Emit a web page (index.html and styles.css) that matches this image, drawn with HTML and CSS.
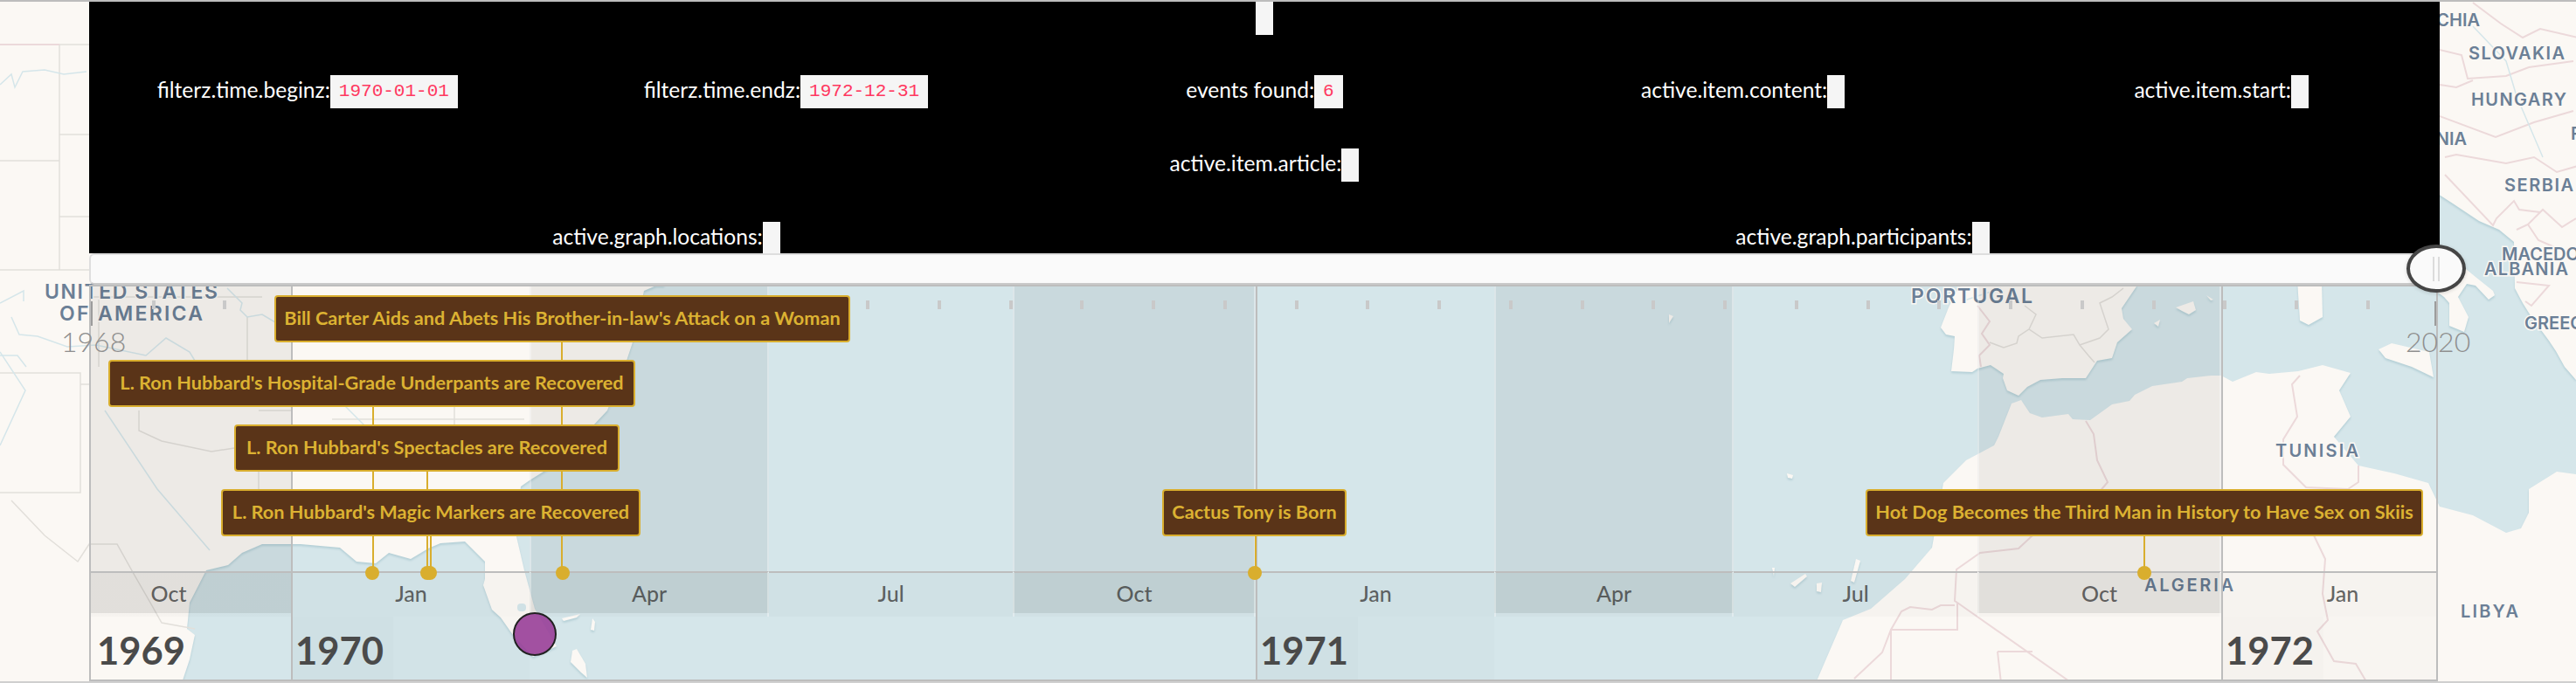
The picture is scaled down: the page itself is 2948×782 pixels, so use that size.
FILE: index.html
```html
<!DOCTYPE html>
<html lang="en">
<head>
<meta charset="utf-8">
<title>Timeline</title>
<link rel="stylesheet" href="styles.css">
</head>
<body>
<div class="stage">
  <svg class="map" viewBox="0 0 2948 782" width="2948" height="782" aria-hidden="true">
    <rect class="water" x="0" y="0" width="2948" height="782"/>
    <g class="land">
      <path d="M0 0H760V327L751 327L737 333L724 392L717 413L695 470L679 487L638 530L606 550L596 557L590 610L600 653L612 697L637 740L610 752L587 727L573 707L563 698L553 670L555 663L555 643L532 620L504 622L490 628L470 640L445 633L430 645L408 643L389 627L344 623L300 623L277 633L261 647L236 653L217 690L214 720L223 727L217 755L208 782H0Z"/>
      <path d="M2078 782L2109 710L2141 697L2180 663L2211 627L2224 553L2250 527L2282 510L2287 500L2302 462L2313 458L2323 473L2337 478L2367 474L2372 480L2392 481L2417 463L2437 459L2443 452L2463 442L2497 437L2503 433L2530 430L2542 430L2555 437L2582 426L2597 428L2630 425L2658 418L2690 427L2677 447L2690 477L2671 500L2699 533L2740 542L2779 553L2792 580L2830 590L2868 610L2885 605L2894 587L2894 560L2926 540L2948 543V782Z"/>
      <path d="M2250 320L2445 320L2445 328L2428 353L2430 365L2440 377L2423 392L2417 410L2400 413L2387 433L2360 433L2335 435L2320 443L2310 453L2297 447L2292 433L2293 428L2278 418L2263 422L2257 426L2233 425L2236 400L2237 385L2227 383L2221 375L2230 352L2238 335Z"/>
      <path d="M2790 0H2948V435L2935 420L2925 402L2917 390L2897 363L2887 347L2878 330L2877 277L2860 263L2837 253L2807 233L2790 222Z"/>
      <path d="M2790 280L2822 308L2833 317L2853 333L2855 338L2848 343L2833 327L2823 325L2813 340L2825 363L2820 380L2803 373L2803 347L2797 340L2790 335Z"/>
      <path d="M2722 400L2737 393L2780 403L2785 432L2760 420L2730 410Z"/>
      <path d="M2629 320L2657 320L2658 363L2642 372L2632 367Z"/>
      <path d="M2490 352L2510 345L2513 355L2505 360L2497 356Z"/>
      <path d="M2465 370L2472 366L2470 374Z"/>
      <path d="M2525 338L2533 343L2530 344Z"/>
      <path d="M2124 640L2129 642L2122 667L2118 665Z"/>
      <path d="M2049 668L2066 657L2068 660L2054 672Z"/>
      <path d="M2079 668L2085 667L2084 678L2079 677Z"/>
      <path d="M2045 542L2052 544L2051 548L2046 547Z"/>
      <path d="M2028 650L2031 650L2030 660Z"/>
      <path d="M643 708L664 703L660 707L645 711Z"/>
      <path d="M678 708L681 712L680 722L676 721Z"/>
      <path d="M655 745L660 743L670 760L672 776L665 770L653 758Z"/>
      <path d="M1910 360L1915 362L1910 370Z"/>
    </g>
    <rect class="lake" x="592" y="691" width="10" height="9" rx="4"/>
    <g class="grey-lines">
      <path d="M0 51H102M68 51V309M68 154H102M0 184H68M68 248H102M0 309H102"/>
      <path d="M0 427H92V564H0M92 427V440H104"/>
      <path d="M13 573L51 613L89 643L102 623L134 623L153 657L172 690L185 713L223 720"/>
      <path d="M113 343V420M283 363V420M104 340H300M320 350H700M159 470L159 493L185 505L242 517L268 513L333 505"/>
      <path d="M296 470H333M380 480H600M520 440V520M296 523V564"/>
      <path d="M2277 392L2293 398L2308 393L2310 385L2322 377L2337 387L2373 383L2380 395L2390 407L2397 415M2322 377L2330 360L2317 350M2380 395L2403 387L2413 377L2403 347L2417 340L2430 330"/>
    </g>
    <g class="pink-lines">
      <path d="M2263 350L2277 368L2268 382L2277 395L2265 407L2267 420"/>
      <path d="M2387 482L2396 497L2400 527L2412 552L2380 590L2326 613L2310 628L2266 633L2239 652L2237 688L2240 690L2371 782M2240 690V721H2164V782M2237 693L2221 693L2211 698L2186 695L2176 700L2164 721L2154 747L2122 777M2286 746H2326M2286 746L2290 782"/>
      <path d="M2632 430L2623 440L2629 477L2613 503L2613 532L2639 558L2687 560L2699 552L2699 533M2687 560L2648 613L2661 640L2658 680L2664 710L2652 723L2671 757L2696 760L2709 782"/>
      <path d="M2830 3L2862 27L2887 43L2907 33L2950 43M2792 57L2817 63L2824 90L2868 87L2894 77L2945 70M2792 97L2811 100L2830 92M2792 133L2856 157L2900 140L2945 127M2798 180L2811 177L2868 187L2900 180L2926 197L2950 190M2798 200L2853 258L2857 250L2877 230L2883 240L2907 243M2880 263L2893 257L2910 240L2932 260L2948 250M2893 257L2905 275L2928 285M2880 323L2917 327L2897 350L2890 345"/>
      <path d="M0 51H68" />
    </g>
    <g class="blue-lines">
      <path d="M0 97L13 85L17 100L26 82L51 80L73 85L99 82"/>
      <path d="M13 363L22 383L43 385L77 397L110 395L167 407L190 387L217 403L223 413"/>
      <path d="M0 347L27 333L27 345M0 407L20 407L30 420M260 330L277 347L275 355L283 363L300 360L320 372"/>
      <path d="M0 403L29 447L0 510M120 470L180 560L240 630M380 450L430 500L470 540M2245 345L2290 330M2830 30L2868 70L2880 110L2910 180"/>
    </g>
    <g class="place">
      <text class="big" x="51" y="342" textLength="198">UNITED STATES</text>
      <text class="big" x="68" y="367" textLength="164">OF AMERICA</text>
      <text class="big" x="2187" y="347" textLength="139">PORTUGAL</text>
      <text x="2604" y="523" textLength="95">TUNISIA</text>
      <text x="2454" y="677" textLength="102">ALGERIA</text>
      <text x="2816" y="707" textLength="66">LIBYA</text>
      <text x="2838" y="30" text-anchor="end">CZECHIA</text>
      <text x="2825" y="68" textLength="110">SLOVAKIA</text>
      <text x="2828" y="121" textLength="109">HUNGARY</text>
      <text x="2823" y="166" text-anchor="end">SLOVENIA</text>
      <text x="2942" y="160">ROMANIA</text>
      <text x="2866" y="219" textLength="79">SERBIA</text>
      <text x="2863" y="298">MACEDONIA</text>
      <text x="2843" y="315" textLength="96">ALBANIA</text>
      <text x="2889" y="377">GREECE</text>
    </g>
  </svg>

  <div class="topline"></div>

  <section class="panel">
    <div class="row">
      <div class="item"><code class="chip"></code></div>
    </div>
    <div class="row">
      <div class="item"><span class="label">filterz.time.beginz:</span><code class="chip">1970-01-01</code></div>
      <div class="item"><span class="label">filterz.time.endz:</span><code class="chip">1972-12-31</code></div>
      <div class="item"><span class="label">events found:</span><code class="chip">6</code></div>
      <div class="item"><span class="label">active.item.content:</span><code class="chip"></code></div>
      <div class="item"><span class="label">active.item.start:</span><code class="chip"></code></div>
    </div>
    <div class="row">
      <div class="item"><span class="label">active.item.article:</span><code class="chip"></code></div>
    </div>
    <div class="row">
      <div class="item"><span class="label">active.graph.locations:</span><code class="chip"></code></div>
      <div class="item"><span class="label">active.graph.participants:</span><code class="chip"></code></div>
    </div>
  </section>

  <div class="slider">
    <div class="handle"><i class="grip"></i><i class="grip"></i></div>
  </div>

  <section class="timeline">
    <div class="quarters">
      <div class="q dark first" style="width:280px">
        <div class="q-top"></div><div class="q-month">Oct</div>
        <div class="q-year"><span class="year">1969</span></div>
      </div>
      <div class="q newyear" style="width:273px">
        <div class="q-top"></div><div class="q-month">Jan</div>
        <div class="q-year"><span class="year">1970</span></div>
      </div>
      <div class="q dark" style="width:274px">
        <div class="q-top"></div><div class="q-month">Apr</div><div class="q-year"></div>
      </div>
      <div class="q" style="width:279px">
        <div class="q-top"></div><div class="q-month">Jul</div><div class="q-year"></div>
      </div>
      <div class="q dark" style="width:278px">
        <div class="q-top"></div><div class="q-month">Oct</div><div class="q-year"></div>
      </div>
      <div class="q newyear" style="width:273px">
        <div class="q-top"></div><div class="q-month">Jan</div>
        <div class="q-year"><span class="year">1971</span></div>
      </div>
      <div class="q dark" style="width:274px">
        <div class="q-top"></div><div class="q-month">Apr</div><div class="q-year"></div>
      </div>
      <div class="q" style="width:279px">
        <div class="q-top"></div><div class="q-month">Jul</div><div class="q-year"></div>
      </div>
      <div class="q dark" style="width:279px">
        <div class="q-top"></div><div class="q-month">Oct</div><div class="q-year"></div>
      </div>
      <div class="q newyear" style="width:276px">
        <div class="q-top"></div><div class="q-month">Jan</div>
        <div class="q-year"><span class="year">1972</span></div>
      </div>
    </div>
    <div class="ticks"></div>
  </section>

  <i class="range-tick range-tick-start"></i>
  <i class="range-tick range-tick-end"></i>
  <span class="range-year range-year-start">1968</span>
  <span class="range-year range-year-end">2020</span>

  <i class="stem s1"></i><i class="stem s2"></i><i class="stem s3"></i>
  <i class="stem s4"></i><i class="stem s5"></i><i class="stem s6"></i>
  <i class="dot d1"></i><i class="dot d2"></i><i class="dot d3"></i>
  <i class="dot d4"></i><i class="dot d5"></i><i class="dot d6"></i>

  <div class="tag t1">Bill Carter Aids and Abets His Brother-in-law's Attack on a Woman</div>
  <div class="tag t2">L. Ron Hubbard's Hospital-Grade Underpants are Recovered</div>
  <div class="tag t3">L. Ron Hubbard's Spectacles are Recovered</div>
  <div class="tag t4">L. Ron Hubbard's Magic Markers are Recovered</div>
  <div class="tag t5">Cactus Tony is Born</div>
  <div class="tag t6">Hot Dog Becomes the Third Man in History to Have Sex on Skiis</div>

  <i class="marker"></i>
  <div class="pagebottom"></div>
</div>
</body>
</html>
```

FILE: styles.css
```css
* { box-sizing: border-box; }
html, body { margin: 0; padding: 0; }
body { background: #fbf8f4; font-family: "Lato", "Liberation Sans", sans-serif; }
.stage { position: relative; width: 2948px; height: 782px; overflow: hidden; }

/* map */
.map { position: absolute; left: 0; top: 0; display: block; }
.water { fill: #d5e6ea; }
.land { fill: #fbf8f4; filter: drop-shadow(0 2px 1px #b4cfd6); }
.lake { fill: #d5e6ea; }
.grey-lines path, .pink-lines path, .blue-lines path { fill: none; stroke-width: 1.5; }
.grey-lines path { stroke: #e2dfda; }
.pink-lines path { stroke: #ecd9da; stroke-width: 2; }
.blue-lines path { stroke: #d5e6ea; }
.place text {
  font-family: "Inter", "Liberation Sans", sans-serif;
  font-size: 20px;
  font-weight: 600;
  fill: #6b7f96;
  stroke: #fbf8f4;
  stroke-width: 3px;
  paint-order: stroke;
}
.place text.big { font-size: 23px; }

/* top chrome */
.topline { height: 2px; background: #bdbdbd; position: relative; }

/* debug panel */
.panel {
  position: relative;
  margin-left: 102px;
  width: 2690px;
  height: 288px;
  background: #000;
  overflow: hidden;
  display: flex;
  flex-direction: column;
  align-items: center;
  gap: 46px;
}
.row { flex: none; width: 2738px; display: flex; }
.item { flex: 1 1 0; display: flex; justify-content: center; align-items: center; height: 38px; }
.label { color: #fff; font-size: 24.6px; font-weight: 400; white-space: nowrap; padding-bottom: 5px; }
.chip {
  display: block;
  height: 38px;
  min-width: 20px;
  padding: 0 10px;
  background: #f5f5f5;
  color: #ff3860;
  font-family: "Liberation Mono", monospace;
  font-size: 21px;
  line-height: 38px;
}

/* slider */
.slider {
  position: relative;
  margin-left: 102px;
  width: 2690px;
  height: 36px;
  background: #fafafa;
  border: 2px solid #dedede;
  border-right: 0;
  border-bottom: 2px solid #c9c9c9;
  border-radius: 6px 0 0 6px;
}
.handle {
  position: absolute;
  left: 2650px;
  top: -12px;
  width: 68px;
  height: 55px;
  border: 4px solid #454545;
  border-radius: 50%;
  background: #fafafa;
  box-shadow: 0 1px 4px rgba(0, 0, 0, .15);
  display: flex;
  justify-content: center;
  align-items: center;
  gap: 4px;
  z-index: 3;
}
.grip { display: block; width: 2px; height: 28px; background: #dcdcdc; }

/* timeline */
.timeline {
  position: relative;
  margin-left: 102px;
  width: 2688px;
  height: 454px;
  border: 2px solid #bdbdbd;
  overflow: hidden;
}
.quarters { display: flex; margin-left: -51px; height: 100%; }
.q { flex: none; display: flex; flex-direction: column; height: 100%; }
.q-top { height: 326px; flex: none; }
.q-month {
  height: 52px;
  flex: none;
  padding-bottom: 4px;
  border-top: 2px solid #bdbdbd;
  background: rgba(0, 0, 0, .02);
  color: rgba(60, 60, 60, .78);
  font-size: 25px;
  font-weight: 500;
  display: flex;
  align-items: center;
  justify-content: center;
}
.q-year { flex: 1; display: flex; }
.dark .q-top { background: rgba(0, 0, 0, .055); }
.dark .q-month { background: linear-gradient(rgba(0, 0, 0, .1) 46px, rgba(0, 0, 0, .02) 46px); }
.dark .q-top, .dark .q-month {
  border-left: 2px solid rgba(255, 255, 255, .35);
  border-right: 2px solid rgba(255, 255, 255, .35);
}
.first .q-top, .first .q-month { border-left: 0; border-right: 0; }
.first .q-year { padding-left: 55px; }
.newyear { border-left: 2px solid #bdbdbd; }
.newyear .q-year { background: rgba(0, 0, 0, .01); }
.year {
  width: 115px;
  padding: 12px 0 0 3px;
  color: #4a4a4a;
  font-size: 43.5px;
  font-weight: 700;
  line-height: 52px;
}
.newyear .year { background: rgba(0, 0, 0, .012); }
.ticks {
  position: absolute;
  left: -12px;
  top: 16px;
  width: 2700px;
  height: 10px;
  background: repeating-linear-gradient(90deg, #c9c9c9 0 4px, transparent 4px 81.75px);
}

/* range ends */
.range-tick { position: absolute; top: 345px; width: 2px; height: 28px; background: #9c9c9c; }
.range-tick-start { left: 104px; }
.range-tick-end { left: 2786px; }
.range-year { position: absolute; top: 371px; color: #8f8f8f; font-size: 32px; font-weight: 300; line-height: 40px; }
.range-year-start { left: 70px; }
.range-year-end { left: 2753px; }

/* events */
.tag {
  position: absolute;
  height: 54px;
  padding-bottom: 2px;
  border: 2px solid #d9ae2e;
  border-radius: 4px;
  background: #5a3418;
  color: #dcb232;
  font-size: 21.7px;
  font-weight: 700;
  white-space: nowrap;
  display: flex;
  align-items: center;
  justify-content: center;
}
.t1 { left: 314px; top: 338px; width: 659px; }
.t2 { left: 124px; top: 412px; width: 603px; }
.t3 { left: 268px; top: 486px; width: 441px; }
.t4 { left: 253px; top: 560px; width: 480px; }
.t5 { left: 1330px; top: 560px; width: 211px; }
.t6 { left: 2135px; top: 560px; width: 638px; }

.stem { position: absolute; width: 2px; background: #d9ae2e; }
.s1 { left: 426px; top: 466px; height: 190px; }
.s2 { left: 488px; top: 540px; height: 116px; }
.s3 { left: 492px; top: 614px; height: 42px; }
.s4 { left: 642px; top: 391px; height: 265px; }
.s5 { left: 1436px; top: 614px; height: 42px; }
.s6 { left: 2453px; top: 614px; height: 42px; }

.dot { position: absolute; top: 648px; width: 16px; height: 16px; border-radius: 50%; background: #d9ae2e; }
.d1 { left: 418px; }
.d2 { left: 481px; }
.d3 { left: 484px; }
.d4 { left: 636px; }
.d5 { left: 1428px; }
.d6 { left: 2446px; }

.marker {
  position: absolute;
  left: 587px;
  top: 701px;
  width: 50px;
  height: 50px;
  border: 2.5px solid #222;
  border-radius: 50%;
  background: rgba(152, 62, 152, .9);
}
.pagebottom { position: absolute; left: 0; top: 780px; width: 2948px; height: 2px; background: #cfcfcf; }
```
